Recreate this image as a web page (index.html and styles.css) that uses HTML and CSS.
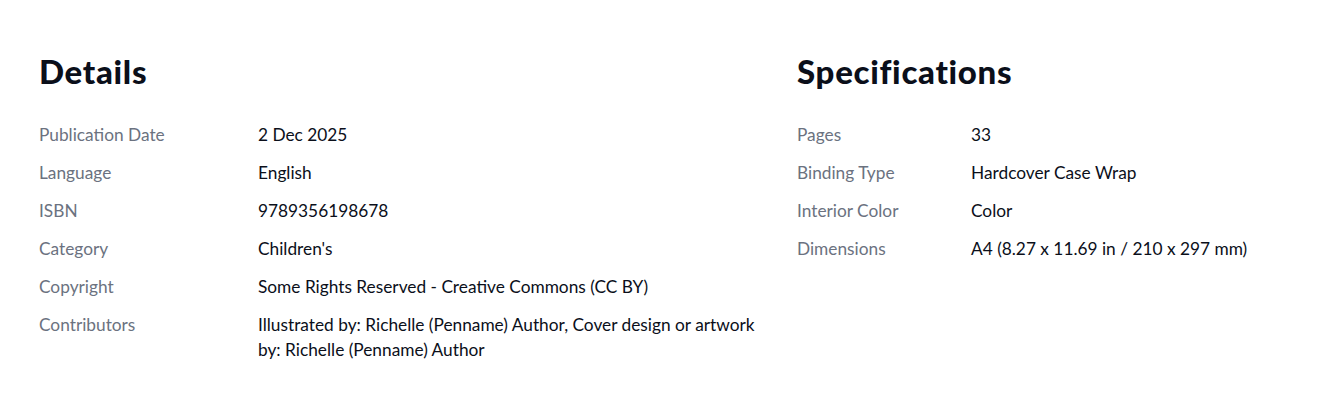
FILE: index.html
```html
<!DOCTYPE html>
<html lang="en">
<head>
<meta charset="utf-8">
<link rel="stylesheet" href="styles.css">
</head>
<body>
<main class="info">
  <section class="panel panel-details">
    <h2 class="title">Details</h2>
    <dl class="rows">
      <div class="row"><dt>Publication Date</dt><dd>2 Dec 2025</dd></div>
      <div class="row"><dt>Language</dt><dd>English</dd></div>
      <div class="row"><dt>ISBN</dt><dd>9789356198678</dd></div>
      <div class="row"><dt>Category</dt><dd>Children's</dd></div>
      <div class="row"><dt>Copyright</dt><dd>Some Rights Reserved - Creative Commons (CC BY)</dd></div>
      <div class="row"><dt>Contributors</dt><dd>Illustrated by: Richelle (Penname) Author, Cover design or artwork by: Richelle (Penname) Author</dd></div>
    </dl>
  </section>
  <section class="panel panel-specs">
    <h2 class="title">Specifications</h2>
    <dl class="rows">
      <div class="row"><dt>Pages</dt><dd>33</dd></div>
      <div class="row"><dt>Binding Type</dt><dd>Hardcover Case Wrap</dd></div>
      <div class="row"><dt>Interior Color</dt><dd>Color</dd></div>
      <div class="row"><dt>Dimensions</dt><dd>A4 (8.27 x 11.69 in / 210 x 297 mm)</dd></div>
    </dl>
  </section>
</main>
</body>
</html>
```

FILE: styles.css
```css
* { box-sizing: border-box; }
html, body { margin: 0; background: #fff; }
body {
  font-family: Lato, "Noto Sans", sans-serif;
  color: #0b0f1a;
}
.info {
  display: flex;
  padding: 51px 39px 0 39px;
}
.panel-details { width: 758px; }
.panel-specs { flex: 1; }
.title {
  margin: 0 0 31px 0;
  font-family: Lato, sans-serif;
  font-weight: 900;
  font-size: 33px;
  letter-spacing: 0.7px;
  line-height: 40px;
  color: #0b0f1a;
}
.rows { margin: 0; display: flex; flex-direction: column; gap: 13px; }
.row { display: flex; font-size: 17.3px; line-height: 25px; }
.row dt { color: #6b7280; flex: none; }
.row dd { margin: 0; color: #0b0f1a; }
.panel-details .row dt { width: 219px; }
.panel-details .row dd { width: 512px; }
.panel-specs .row dt { width: 174px; }
```
